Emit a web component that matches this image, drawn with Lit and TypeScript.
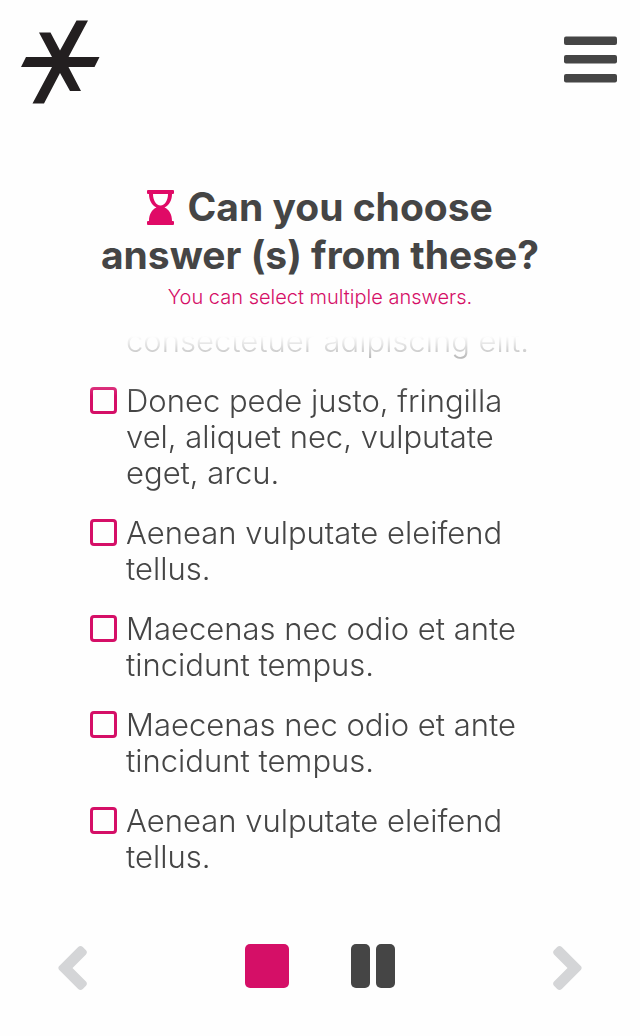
import { LitElement, html, css } from "lit";
import { customElement, property } from "lit/decorators.js";

const ANSWERS = [
  ["\u00a0", "consectetuer adipiscing elit."],
  ["Donec pede justo, fringilla", "vel, aliquet nec, vulputate", "eget, arcu."],
  ["Aenean vulputate eleifend", "tellus."],
  ["Maecenas nec odio et ante", "tincidunt tempus."],
  ["Maecenas nec odio et ante", "tincidunt tempus."],
  ["Aenean vulputate eleifend", "tellus."],
];

@customElement("answer-option")
export class AnswerOption extends LitElement {
  @property({ attribute: false }) lines: string[] = [];

  static styles = css`
    :host {
      display: block;
      flex: none;
    }
    .option {
      display: flex;
      align-items: flex-start;
      gap: 9px;
      cursor: pointer;
    }
    .box {
      appearance: none;
      flex: none;
      box-sizing: border-box;
      width: 27px;
      height: 27px;
      margin: 4px 0 0;
      border: 3px solid #d50f67;
      border-radius: 4px;
      background: transparent;
    }
    .box:checked {
      background: #d50f67;
    }
    .line {
      display: block;
      white-space: nowrap;
    }
  `;

  render() {
    return html`
      <label class="option">
        <input class="box" type="checkbox" />
        <span>${this.lines.map((l) => html`<span class="line">${l}</span>`)}</span>
      </label>
    `;
  }
}

@customElement("app-root")
export class AppRoot extends LitElement {
  static styles = css`
    :host {
      display: flex;
      flex-direction: column;
      box-sizing: border-box;
      height: 100vh;
      background: #fefefe;
      color: #454545;
      font-family: Inter, "Open Sans", sans-serif;
    }
    button {
      display: block;
      padding: 0;
      border: 0;
      background: none;
      color: inherit;
      cursor: pointer;
    }
    svg {
      display: block;
      fill: currentColor;
    }
    .top {
      display: flex;
      justify-content: space-between;
      align-items: flex-start;
      padding: 20px 23px 0 20px;
    }
    .logo {
      color: #231f20;
    }
    .menu {
      margin-top: 16px;
    }
    .question {
      margin-top: 78px;
      padding: 0 90px;
      text-align: center;
    }
    .title {
      margin: 0;
      font-size: 39px;
      line-height: 48px;
      font-weight: 700;
    }
    .title span {
      display: block;
      white-space: nowrap;
    }
    .glass {
      display: inline-block;
      vertical-align: -4px;
      margin-right: 4px;
      color: #e00a66;
    }
    .hint {
      margin: 4px 0 0;
      font-size: 20px;
      line-height: 28px;
      font-weight: 300;
      color: #d50f67;
    }
    .answers {
      flex: 1;
      min-height: 0;
      display: flex;
      flex-direction: column;
      justify-content: flex-end;
      gap: 24px;
      margin-top: 25px;
      padding: 0 90px;
      overflow: hidden;
      font-size: 31px;
      line-height: 36px;
      font-weight: 300;
      mask-image: linear-gradient(to bottom, transparent, #000 60px);
    }
    .player {
      display: flex;
      justify-content: space-between;
      align-items: center;
      padding: 69px 58px 44px;
    }
    .transport {
      display: flex;
      gap: 62px;
      padding-bottom: 4px;
    }
    .stop {
      color: #d50f67;
    }
    .step {
      color: #d4d5d7;
    }
  `;

  render() {
    return html`
      <header class="top">
        <svg class="logo" width="80" height="85" viewBox="0 0 80 85" role="img" aria-label="Logo">
          <path d="M56.500 0.500H68L48.500 37H79.500L74.500 47H48.500L61 71H50L40 53L24 83.500H12.500L32 47H1L6 37H32L19 12.500H30.500L40 30.500Z" />
        </svg>
        <button class="menu" aria-label="Menu">
          <svg width="53" height="47" viewBox="0 0 53 47">
            <rect y="0.500" width="53" height="8.500" rx="2" />
            <rect y="19" width="53" height="8.500" rx="2" />
            <rect y="38" width="53" height="8.500" rx="2" />
          </svg>
        </button>
      </header>

      <section class="question">
        <h1 class="title">
          <span>
            <svg class="glass" width="27" height="35" viewBox="0 0 27 35">
              <path
                fill-rule="evenodd"
                d="M1 0H26Q27 0 27 1V3Q27 4 26 4H25C25 10 22.500 15 17.500 17.500C22 19.500 25 24 25 31H26Q27 31 27 32V34Q27 35 26 35H1Q0 35 0 34V32Q0 31 1 31H2C2 24 5 19.500 9.500 17.500C4.500 15 2 10 2 4H1Q0 4 0 3V1Q0 0 1 0ZM6 4C6 10 9 15.500 13.500 15.500C18 15.500 21 10 21 4Z"
              />
            </svg>
            Can you choose
          </span>
          <span>answer (s) from these?</span>
        </h1>
        <p class="hint">You can select multiple answers.</p>
      </section>

      <main class="answers">
        ${ANSWERS.map((lines) => html`<answer-option .lines=${lines}></answer-option>`)}
      </main>

      <nav class="player">
        <button class="step" aria-label="Previous">
          <svg width="29" height="46" viewBox="0 0 29 46">
            <path d="M1 21.300L20.200 1.900Q22.500 0 24.800 1.900L28 5.200Q29.800 7.300 28 9.500L14.500 23L28 36.500Q29.800 38.700 28 40.800L24.800 44.100Q22.500 46 20.200 44.100L1 24.700Q-0.300 23 1 21.300Z" />
          </svg>
        </button>
        <div class="transport">
          <button class="stop" aria-label="Stop">
            <svg width="44" height="44" viewBox="0 0 44 44"><rect width="44" height="44" rx="5" /></svg>
          </button>
          <button aria-label="Pause">
            <svg width="44" height="44" viewBox="0 0 44 44">
              <rect width="19" height="44" rx="5" />
              <rect x="25" width="19" height="44" rx="5" />
            </svg>
          </button>
        </div>
        <button class="step" aria-label="Next">
          <svg width="29" height="46" viewBox="0 0 29 46">
            <path d="M28 21.300L8.800 1.900Q6.500 0 4.200 1.900L1 5.200Q-0.800 7.300 1 9.500L14.500 23L1 36.500Q-0.800 38.700 1 40.800L4.200 44.100Q6.500 46 8.800 44.100L28 24.700Q29.300 23 28 21.300Z" />
          </svg>
        </button>
      </nav>
    `;
  }
}
